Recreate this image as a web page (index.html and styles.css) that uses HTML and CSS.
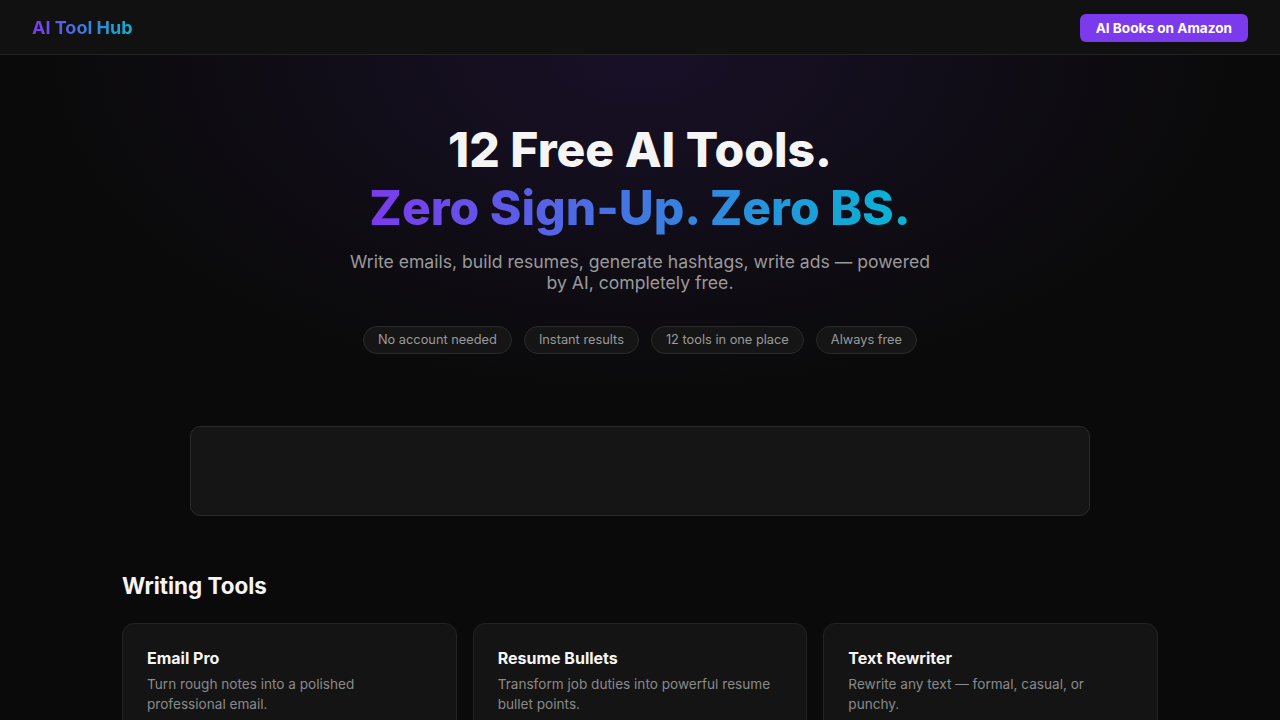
FILE: index.html
```html
<!DOCTYPE html>
<html lang="en">
<head>
<meta charset="utf-8">
<title>AI Tool Hub</title>
<link rel="stylesheet" href="styles.css">
</head>
<body>
<header class="topbar">
  <a class="logo" href="#">AI Tool Hub</a>
  <a class="cta" href="#">AI Books on Amazon</a>
</header>
<section class="hero">
  <h1 class="hero-title">12 Free AI Tools.<br><span class="grad">Zero Sign-Up. Zero BS.</span></h1>
  <p class="hero-sub">Write emails, build resumes, generate hashtags, write ads — powered by AI, completely free.</p>
  <div class="pills">
    <span class="pill">No account needed</span>
    <span class="pill">Instant results</span>
    <span class="pill">12 tools in one place</span>
    <span class="pill">Always free</span>
  </div>
</section>
<div class="ad-slot"></div>
<main class="content">
  <h2 class="section-title">Writing Tools</h2>
  <div class="grid">
    <div class="card">
      <h3 class="card-title">Email Pro</h3>
      <p class="card-desc">Turn rough notes into a polished professional email.</p>
    </div>
    <div class="card">
      <h3 class="card-title">Resume Bullets</h3>
      <p class="card-desc">Transform job duties into powerful resume bullet points.</p>
    </div>
    <div class="card">
      <h3 class="card-title">Text Rewriter</h3>
      <p class="card-desc">Rewrite any text — formal, casual, or punchy.</p>
    </div>
  </div>
</main>
</body>
</html>
```
FILE: styles.css
```css
* { box-sizing: border-box; }
html, body { margin: 0; padding: 0; }
body {
  background: #0a0a0a;
  color: #f2f2f2;
  font-family: Inter, "Noto Sans", sans-serif;
}
a { text-decoration: none; }
.topbar {
  height: 55px;
  display: flex;
  align-items: flex-start;
  justify-content: space-between;
  padding: 14px 32px 0;
  background: #111111;
  border-bottom: 1px solid #232323;
}
.logo {
  font-size: 18px;
  font-weight: 700;
  line-height: 28px;
  background: linear-gradient(90deg, #7c3aed, #06b6d4);
  -webkit-background-clip: text;
  background-clip: text;
  color: transparent;
}
.cta {
  background: #7c3aed;
  color: #fff;
  font-size: 13.6px;
  font-weight: 700;
  height: 28px;
  line-height: 28px;
  padding: 0 16px;
  border-radius: 6px;
}
.hero {
  text-align: center;
  padding: 66px 24px 72px;
  background: radial-gradient(ellipse 600px 340px at 50% 0%, rgba(124, 58, 237, 0.13), rgba(124, 58, 237, 0) 100%);
}
.hero-title {
  margin: 0;
  font-size: 48px;
  font-weight: 800;
  line-height: 58px;
  color: #f5f5f5;
}
.grad {
  background: linear-gradient(90deg, #7c3aed, #06b6d4);
  -webkit-background-clip: text;
  background-clip: text;
  color: transparent;
}
.hero-sub {
  max-width: 600px;
  margin: 14px auto 0;
  font-size: 17.6px;
  line-height: 21px;
  color: #9a9a9a;
}
.pills {
  display: flex;
  justify-content: center;
  gap: 12px;
  margin-top: 33px;
}
.pill {
  height: 28px;
  line-height: 26px;
  padding: 0 14px;
  border: 1px solid #2a2a2a;
  border-radius: 14px;
  background: #151515;
  font-size: 12.8px;
  color: #9a9a9a;
}
.ad-slot {
  width: 900px;
  height: 90px;
  margin: 0 auto;
  background: #151515;
  border: 1px solid #2a2a2a;
  border-radius: 10px;
}
.content {
  max-width: 1100px;
  margin: 0 auto;
  padding: 56px 32px 40px;
}
.section-title {
  margin: 0 0 23px;
  font-size: 22.4px;
  font-weight: 700;
  line-height: 28px;
  color: #f5f5f5;
}
.grid {
  display: grid;
  grid-template-columns: repeat(3, 1fr);
  gap: 16px;
}
.card {
  background: #141414;
  border: 1px solid #222;
  border-radius: 12px;
  padding: 23px 24px 28px;
  min-height: 140px;
}
.card-title {
  margin: 0 0 5px;
  font-size: 16px;
  font-weight: 700;
  line-height: 22px;
  color: #f5f5f5;
}
.card-desc {
  margin: 0;
  font-size: 13.6px;
  line-height: 20px;
  color: #8a8a8a;
}
```
